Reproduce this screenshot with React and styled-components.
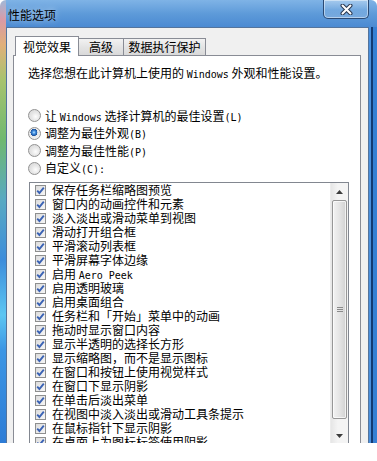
import React from "react";
import styled, { createGlobalStyle } from "styled-components";

const GlobalStyle = createGlobalStyle`
  body {
    margin: 0;
    background: #fff;
    font-family: "Noto Sans CJK SC", "Noto Sans", sans-serif;
    font-size: 12px;
    color: #000;
  }
`;

const effects = [
  "保存任务栏缩略图预览",
  "窗口内的动画控件和元素",
  "淡入淡出或滑动菜单到视图",
  "滑动打开组合框",
  "平滑滚动列表框",
  "平滑屏幕字体边缘",
  "启用 Aero Peek",
  "启用透明玻璃",
  "启用桌面组合",
  "任务栏和「开始」菜单中的动画",
  "拖动时显示窗口内容",
  "显示半透明的选择长方形",
  "显示缩略图，而不是显示图标",
  "在窗口和按钮上使用视觉样式",
  "在窗口下显示阴影",
  "在单击后淡出菜单",
  "在视图中淡入淡出或滑动工具条提示",
  "在鼠标指针下显示阴影",
  "在桌面上为图标标签使用阴影",
];

const options = [
  { label: "让 Windows 选择计算机的最佳设置(L)", checked: false },
  { label: "调整为最佳外观(B)", checked: true },
  { label: "调整为最佳性能(P)", checked: false },
  { label: "自定义(C):", checked: false },
];

const tabs = [
  { label: "视觉效果", width: 64, active: true },
  { label: "高级", width: 46 },
  { label: "数据执行保护", width: 83 },
];

// SimSun draws latin letters half width, so ascii runs get a mono face
const Mixed = ({ text }) =>
  text.split(/([\x21-\x7e][\x20-\x7e]*[\x21-\x7e]|[\x21-\x7e])/).map((part, i) =>
    /[\x21-\x7e]/.test(part) ? <Latin key={i}>{part}</Latin> : part
  );

const CheckIcon = () => (
  <svg width="9" height="9" viewBox="0 0 9 9">
    <path d="M1.2 4.6 L3.4 7 L7.8 1.6" fill="none" stroke="#3a62b4" strokeWidth="1.9" />
  </svg>
);

const CloseIcon = () => (
  <svg width="13" height="11" viewBox="0 0 13 11">
    <path d="M2.5 1.5 L10.5 9.5 M10.5 1.5 L2.5 9.5" stroke="#2a3850" strokeWidth="4" strokeLinecap="round" />
    <path d="M2.5 1.5 L10.5 9.5 M10.5 1.5 L2.5 9.5" stroke="#fff" strokeWidth="2" strokeLinecap="round" />
  </svg>
);

const Arrow = ({ down }) => (
  <svg width="7" height="4" viewBox="0 0 7 4">
    <path d={down ? "M0 0 H7 L3.5 4 Z" : "M0 4 H7 L3.5 0 Z"} fill="#3c3c3c" />
  </svg>
);

const App = () => {
  return (
    <>
      <GlobalStyle />
      <Window>
        <TitleBar>
          <Title>性能选项</Title>
          <CloseButton>
            <CloseIcon />
          </CloseButton>
        </TitleBar>
        <Client>
          <TabStrip>
            {tabs.map((t) => (
              <Tab key={t.label} $width={t.width} $active={t.active}>
                {t.label}
              </Tab>
            ))}
          </TabStrip>
          <Panel>
            <Description>
              <Mixed text="选择您想在此计算机上使用的 Windows 外观和性能设置。" />
            </Description>
            <RadioGroup>
              {options.map((o) => (
                <RadioRow key={o.label}>
                  <Radio $checked={o.checked} />
                  <Label>
                    <Mixed text={o.label} />
                  </Label>
                </RadioRow>
              ))}
            </RadioGroup>
            <ListBox>
              <Items>
                {effects.map((e) => (
                  <ItemRow key={e}>
                    <CheckBox>
                      <CheckIcon />
                    </CheckBox>
                    <ItemText>
                      <Mixed text={e} />
                    </ItemText>
                  </ItemRow>
                ))}
              </Items>
              <ScrollBar>
                <ArrowButton>
                  <Arrow />
                </ArrowButton>
                <Thumb>
                  <Grip />
                </Thumb>
                <Track />
                <ArrowButton>
                  <Arrow down />
                </ArrowButton>
              </ScrollBar>
            </ListBox>
          </Panel>
        </Client>
      </Window>
    </>
  );
};

const Window = styled.div`
  width: 377px;
  height: 443px;
  overflow: hidden;
  box-sizing: border-box;
  display: flex;
  flex-direction: column;
  padding: 0 8px 0 6px;
  border-radius: 6px 6px 0 0;
  background:
    linear-gradient(
        to bottom,
        #9fb9d9 0,
        #d99aa6 20px,
        #e0b07a 45px,
        #a7c36e 80px,
        #6fb870 140px,
        #58a9c2 200px,
        #3d8ddb 260px,
        #5cc6f2 315px,
        #3c96e4 350px,
        #2d7cd6 443px
      )
      left top / 6px 100% no-repeat,
    linear-gradient(
        to right,
        #4a90de 0 2px,
        #143a72 2px 4px,
        #3780d4 4px 8px
      )
      right 0 top 27px / 8px 100% no-repeat,
    linear-gradient(to bottom, #7fb3e6 0, #5d9ad9 14px, #4b8ad2 27px, #3f82d0 100%);
`;

const TitleBar = styled.div`
  height: 27px;
  display: flex;
  justify-content: space-between;
  align-items: flex-start;
  flex-shrink: 0;
`;

const Title = styled.div`
  padding: 7px 0 0 2px;
  line-height: 16px;
  font-size: 12px;
  color: #000;
  text-shadow: 0 0 6px rgba(255, 255, 255, 0.7);
`;

const CloseButton = styled.div`
  width: 46px;
  height: 19px;
  box-sizing: border-box;
  border: 1px solid #2b4a74;
  border-top: none;
  border-radius: 0 0 5px 5px;
  background: linear-gradient(
    to bottom,
    rgba(255, 255, 255, 0.3),
    rgba(255, 255, 255, 0.08) 55%,
    rgba(255, 255, 255, 0.2)
  );
  box-shadow: inset 0 0 0 1px rgba(255, 255, 255, 0.45);
  display: flex;
  align-items: center;
  justify-content: center;
`;

const Client = styled.div`
  flex: 1;
  display: flex;
  flex-direction: column;
  background: #f0f0f0;
  border: 1px solid #54749c;
  border-bottom: none;
`;

const TabStrip = styled.div`
  display: flex;
  align-items: flex-end;
  height: 19px;
  padding: 8px 0 0 8px;
  position: relative;
  z-index: 1;
  flex-shrink: 0;
`;

const Tab = styled.div`
  width: ${(p) => p.$width}px;
  height: ${(p) => (p.$active ? 20 : 17)}px;
  margin-bottom: ${(p) => (p.$active ? -1 : 0)}px;
  box-sizing: border-box;
  border: 1px solid #898c95;
  border-bottom: none;
  & + & {
    margin-left: -1px;
  }
  background: ${(p) =>
    p.$active ? "#fff" : "linear-gradient(to bottom, #f2f2f2, #e4e4e4 50%, #d9d9d9)"};
  display: flex;
  align-items: center;
  justify-content: center;
  line-height: 14px;
  font-size: 12px;
`;

const Panel = styled.div`
  flex: 1;
  margin: 0 7px 0 6px;
  background: #fff;
  border: 1px solid #898c95;
  padding: 9px 0 0 14px;
`;

const Description = styled.div`
  line-height: 16px;
  white-space: nowrap;
`;

const Latin = styled.span`
  font-family: "DejaVu Sans Mono", "Liberation Mono", monospace;
  font-size: 10px;
`;

const RadioGroup = styled.div`
  margin-top: 24px;
  display: flex;
  flex-direction: column;
`;

const RadioRow = styled.div`
  height: 17.5px;
  display: flex;
  align-items: center;
  gap: 4px;
  white-space: nowrap;
`;

const Label = styled.span`
  display: block;
  line-height: 14px;
  height: 14px;
`;

const Radio = styled.span`
  width: 13px;
  height: 13px;
  box-sizing: border-box;
  border-radius: 50%;
  border: 1px solid #929292;
  background: ${(p) =>
    p.$checked
      ? "radial-gradient(circle at 45% 40%, #bfe4ff 0, #3f8ee0 1.6px, #1b4f9a 3.4px, #e8e8e8 3.6px, #fafafa 100%)"
      : "radial-gradient(circle at 60% 60%, #fdfdfd 0, #e6e6e6 45%, #d4d4d4 100%)"};
  flex-shrink: 0;
`;

const ListBox = styled.div`
  margin: 5px 0 0 1px;
  width: 320px;
  height: 263px;
  box-sizing: border-box;
  border: 1px solid #828790;
  display: flex;
  background: #fff;
`;

const Items = styled.div`
  flex: 1;
  display: flex;
  flex-direction: column;
  overflow: hidden;
`;

const ItemRow = styled.div`
  height: 14px;
  flex-shrink: 0;
  display: flex;
  align-items: center;
  gap: 6px;
  padding-left: 5px;
  white-space: nowrap;
`;

const ItemText = styled.span`
  display: block;
  height: 14px;
  line-height: 14px;
`;

const CheckBox = styled.span`
  width: 11px;
  height: 11px;
  box-sizing: border-box;
  border: 1px solid #8e8f8f;
  background: linear-gradient(135deg, #dcdcdc, #f6f6f6);
  display: flex;
  align-items: center;
  justify-content: center;
  flex-shrink: 0;
`;

const ScrollBar = styled.div`
  width: 17px;
  display: flex;
  flex-direction: column;
  background: linear-gradient(to right, #e6e6e6, #f4f4f4 40%, #f4f4f4);
  border-left: 1px solid #ececec;
`;

const ArrowButton = styled.div`
  height: 17px;
  display: flex;
  align-items: center;
  justify-content: center;
  flex-shrink: 0;
`;

const Thumb = styled.div`
  height: 219px;
  margin: 0 1px;
  box-sizing: border-box;
  border: 1px solid #979797;
  border-radius: 2px;
  background: linear-gradient(to right, #f3f3f3, #e6e6e6 45%, #d2d2d2);
  box-shadow: inset 0 0 0 1px rgba(255, 255, 255, 0.7);
  display: flex;
  align-items: center;
  justify-content: center;
`;

const Grip = styled.div`
  width: 6px;
  height: 5px;
  background: repeating-linear-gradient(
    to bottom,
    #8a8a8a 0 1px,
    transparent 1px 2px
  );
`;

const Track = styled.div`
  flex: 1;
`;

export default App;
